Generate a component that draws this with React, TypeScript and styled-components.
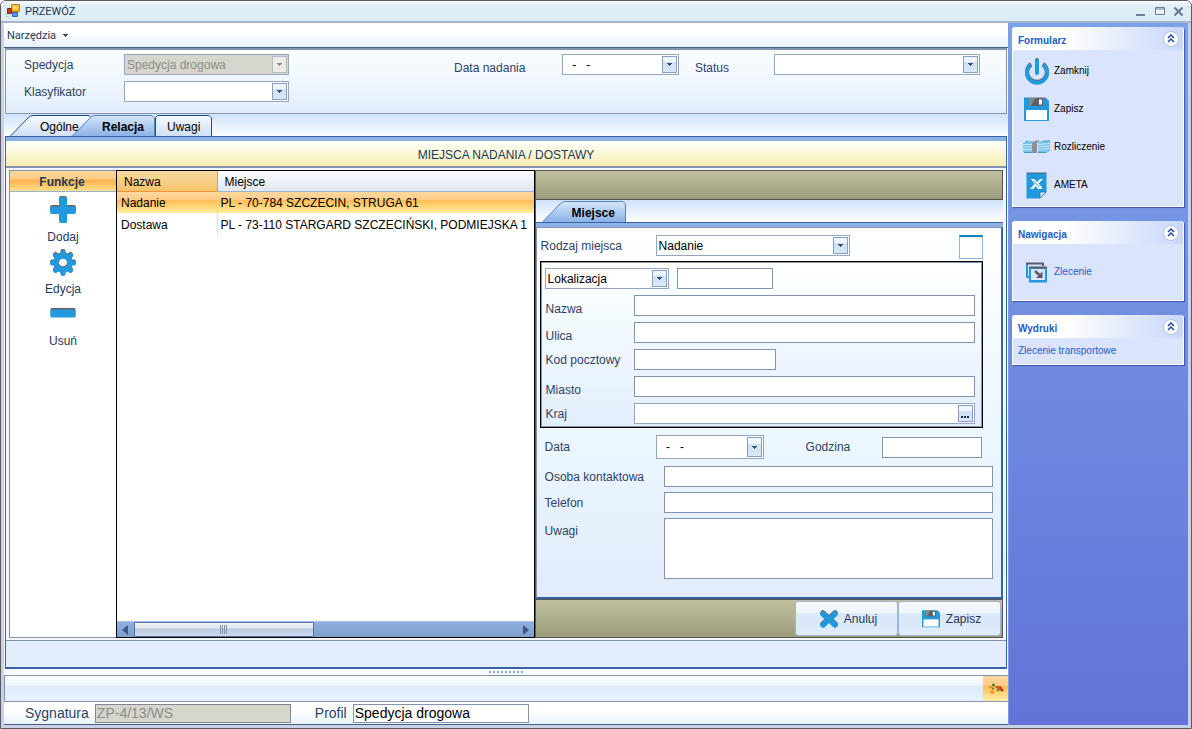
import React from "react";
import styled, { createGlobalStyle, css } from "styled-components";

const navy = "#1e395b";
const line = "#8494b0";
const steel = "#3763a5";
const blue = "#2299dd";

const Global = createGlobalStyle`
  *, *::before, *::after { box-sizing: border-box; }
  body { margin: 0; }
  body, button, input, select, textarea {
    font-family: "Liberation Sans", Arial, sans-serif;
    font-size: 12px;
    line-height: 14px;
    color: ${navy};
  }
  button { padding: 0; border: 0; background: none; cursor: pointer; }
`;

/* ---------- window frame ---------- */

const Window = styled.div`
  display: flex;
  flex-direction: column;
  min-height: 100vh;
  border: 1px solid #5c5a60;
  border-radius: 6px 6px 0 0;
  background: #cbd5ea;
  overflow: hidden;
`;

const TitleBar = styled.header`
  display: flex;
  align-items: center;
  gap: 4px;
  height: 22px;
  padding: 0 5px;
  border-bottom: 2px solid #a3b6cd;
  background: linear-gradient(#fafaff, #deeff6 5px, #dcedf5);
`;

const WindowTitle = styled.h1`
  flex: 1;
  margin: 0;
  padding-top: 2px;
  font-family: Roboto, sans-serif;
  font-size: 11px;
  font-weight: 400;
  line-height: 14px;
`;

const WindowButton = styled.button`
  display: flex;
  align-items: center;
  justify-content: center;
  width: 15px;
  height: 16px;
`;

const Body = styled.div`
  display: flex;
  flex: 1;
  border: solid #c8d2e6;
  border-width: 0 3px 3px;
`;

const Main = styled.main`
  display: flex;
  flex: 1;
  flex-direction: column;
  min-width: 0;
  background: #f7fbff;
`;

const MenuBar = styled.nav`
  display: flex;
  align-items: center;
  height: 25px;
  padding: 1px 0 0 3px;
  border-bottom: 1px solid #4c5f80;
  background: linear-gradient(#fff 40%, #e6f0fc);
`;

const MenuButton = styled.button`
  display: flex;
  align-items: center;
  gap: 7px;
  font-family: Roboto, sans-serif;
  font-size: 11px;
`;

/* ---------- fields ---------- */

const Label = styled.label<{ $width?: number; $low?: boolean; $large?: boolean }>`
  flex: none;
  width: ${(p) => (p.$width ? `${p.$width}px` : "auto")};
  font-size: ${(p) => (p.$large ? 14 : 12)}px;
  line-height: ${(p) => (p.$large ? 16 : 14)}px;
  color: #2d4266;
  white-space: nowrap;
  ${(p) => p.$low && css`align-self: flex-end;`}
`;

const TextInput = styled.input<{ $width?: number; $large?: boolean }>`
  flex: ${(p) => (p.$width ? "none" : "1")};
  width: ${(p) => (p.$width ? `${p.$width}px` : "auto")};
  min-width: 0;
  height: ${(p) => (p.$large ? 19 : 21)}px;
  padding: 0 1px;
  border: 1px solid ${line};
  background: #fff;
  color: #000;
  font-size: ${(p) => (p.$large ? 14 : 12)}px;
  &:disabled { background: #d6d6ce; color: #8c8c88; border-color: #85878c; }
`;

const TextArea = styled.textarea`
  flex: 1;
  min-width: 0;
  height: 61px;
  border: 1px solid ${line};
  background: #fff;
  resize: none;
`;

const FieldBox = styled.div<{ $width?: number; $tall?: boolean; $off?: boolean }>`
  position: relative;
  display: flex;
  align-items: center;
  flex: ${(p) => (p.$width ? "none" : "1")};
  width: ${(p) => (p.$width ? `${p.$width}px` : "auto")};
  height: ${(p) => (p.$tall ? 24 : 21)}px;
  border: 1px solid #94a6c2;
  background: ${(p) => (p.$off ? "#d6d6ce" : "#fff")};
`;

const NativeSelect = styled.select`
  flex: 1;
  min-width: 0;
  height: 100%;
  padding: 0 18px 0 2px;
  border: 0;
  appearance: none;
  background: transparent;
  color: #000;
  &:disabled { color: #8c8c88; opacity: 1; }
`;

const BareInput = styled.input`
  flex: 1;
  min-width: 0;
  height: 100%;
  padding: 0 6px;
  border: 0;
  background: transparent;
  color: #000;
  white-space: pre;
`;

const dropFace = css`
  display: flex;
  align-items: center;
  justify-content: center;
  width: 15px;
  border: 1px solid #8a9fc4;
  background: linear-gradient(#eef5fd 35%, #cfe1f6 36%, #d8e8fa);
`;

const SelectArrow = styled.span<{ $off?: boolean }>`
  ${dropFace}
  position: absolute;
  top: 1px;
  right: 1px;
  bottom: 1px;
  pointer-events: none;
  ${(p) => p.$off && css`background: #ecebe8; border-color: #b4bac6;`}
`;

const FieldButton = styled.button`
  ${dropFace}
  flex: none;
  align-self: stretch;
  margin: 1px;
`;

const Arrow = ({ off }: { off?: boolean }) => (
  <svg width="5" height="3" viewBox="0 0 5 3" aria-hidden="true">
    <path d="M0 0H5V1H4V2H3V3H2V2H1V1H0Z" fill={off ? "#85888f" : "#37506f"} />
  </svg>
);

type SelectProps = { id: string; width?: number; value?: string; disabled?: boolean; label?: string };

const Select = ({ id, width, value = "", disabled, label }: SelectProps) => (
  <FieldBox $width={width} $off={disabled}>
    <NativeSelect id={id} disabled={disabled} defaultValue={value} aria-label={label}>
      <option value={value}>{value}</option>
    </NativeSelect>
    <SelectArrow $off={disabled}><Arrow off={disabled} /></SelectArrow>
  </FieldBox>
);

const DateField = ({ id, width, tall }: { id: string; width: number; tall?: boolean }) => (
  <FieldBox $width={width} $tall={tall}>
    <BareInput id={id} defaultValue={"\u00a0-\u00a0\u00a0\u00a0-"} />
    <FieldButton aria-label="Wybierz datę"><Arrow /></FieldButton>
  </FieldBox>
);

const Row = styled.div<{ $gap?: number }>`
  display: flex;
  align-items: center;
  gap: ${(p) => p.$gap ?? 0}px;
`;

/* ---------- top form ---------- */

const HeaderPanel = styled.section`
  display: flex;
  align-items: flex-start;
  height: 66px;
  margin: 0 1px;
  padding: 4px 18px;
  border: 1px solid ${line};
  border-top-width: 2px;
  background: linear-gradient(#fbfeff, #e3edfc);
`;

const HeaderColumn = styled.div<{ $before?: number }>`
  display: flex;
  flex-direction: column;
  gap: 6px;
  margin-left: ${(p) => p.$before ?? 0}px;
`;

/* ---------- tabs ---------- */

const TabStrip = styled.div`
  display: flex;
  align-items: flex-end;
  height: 22px;
  padding-left: 6px;
  background: linear-gradient(#cfe3fd, #fcfeff);
`;

const TabButton = styled.button<{ $width: number; $active?: boolean; $overlap?: boolean; $slanted?: boolean }>`
  position: relative;
  z-index: ${(p) => (p.$active ? 1 : 0)};
  width: ${(p) => p.$width}px;
  height: 21px;
  margin-left: ${(p) => (p.$overlap ? -20 : 0)}px;
  padding-left: ${(p) => (p.$slanted ? 30 : 12)}px;
  color: #000;
  text-align: left;
  font-weight: ${(p) => (p.$active ? 700 : 400)};
`;

const TabShape = styled.svg`
  position: absolute;
  inset: 0;
`;

const TabText = styled.span`
  position: relative;
  display: block;
  padding-top: 3px;
`;

type TabProps = { text: string; width: number; active?: boolean; overlap?: boolean; slanted?: boolean };

const Tab = ({ text, width, active, overlap, slanted }: TabProps) => {
  const id = `fill-${text}`;
  const start = slanted ? "M0.5 21L18 3Q20 0.5 23 0.5" : "M0.5 21V2.5L2.5 0.5";
  return (
    <TabButton role="tab" aria-selected={!!active} $width={width} $active={active} $overlap={overlap} $slanted={slanted}>
      <TabShape width={width} height="21" aria-hidden="true">
        <defs>
          <linearGradient id={id} x1="0" y1="0" x2="0" y2="1">
            <stop offset="0" stopColor={active ? "#d5e6fb" : "#f6faff"} />
            <stop offset="1" stopColor={active ? "#8cb2e6" : "#cfe0f8"} />
          </linearGradient>
        </defs>
        <path d={`${start}H${width - 3}L${width - 0.5} 3V21`} fill={`url(#${id})`} stroke={active ? "#5a82bd" : "#1c4a9a"} />
      </TabShape>
      <TabText>{text}</TabText>
    </TabButton>
  );
};

const TabBody = styled.section`
  display: flex;
  flex: 1;
  flex-direction: column;
  margin: 0 1px;
  border: 1px solid ${steel};
  border-bottom-width: 2px;
  background: #e3edfc;
`;

const Band = styled.div<{ $edged?: boolean }>`
  height: ${(p) => (p.$edged ? 5 : 4)}px;
  border-top: ${(p) => (p.$edged ? `1px solid ${steel}` : "0")};
  background: #8cb2e6;
`;

const Banner = styled.h2`
  margin: 0;
  padding: 7px 0 4px;
  border-bottom: 2px solid ${line};
  background: linear-gradient(#fffffb, #f5efb2);
  font-size: 12px;
  font-weight: 400;
  line-height: 14px;
  text-align: center;
`;

const Workspace = styled.div`
  display: flex;
  flex: 1;
  padding: 2px 3px;
  border-bottom: 1px solid ${line};
  background: #f4f7ff;
`;

const FooterPanel = styled.div`
  height: 26px;
  background: #e3edfc;
`;

/* ---------- function list ---------- */

const FunctionPane = styled.aside`
  flex: none;
  width: 107px;
  border: 1px solid ${line};
  border-right: 0;
  background: #fff;
`;

const FunctionHeading = styled.h3`
  margin: 0;
  padding: 4px 2px 2px 0;
  border-bottom: 1px solid #9cb3cd;
  background: linear-gradient(#ffd89c, #ffcd85 40%, #fdb04b 45%, #ffe08e);
  font-size: 12px;
  line-height: 14px;
  text-align: center;
`;

const FunctionButton = styled.button`
  display: flex;
  flex-direction: column;
  align-items: center;
  width: 100%;
  height: 52px;
`;

const FunctionIcon = styled.span`
  display: flex;
  align-items: center;
  height: 36px;
  margin-bottom: 2px;
`;

/* ---------- list of places ---------- */

const ListPane = styled.section`
  display: flex;
  flex: 418 1 0;
  flex-direction: column;
  min-width: 0;
  border: 1px solid #000;
  background: #fff;
`;

const TableArea = styled.div`
  flex: 1;
  overflow: hidden;
`;

const PlacesTable = styled.table`
  width: 100%;
  border-collapse: collapse;
  table-layout: fixed;
  color: #000;
`;

const HeadCell = styled.th<{ $sorted?: boolean }>`
  width: ${(p) => (p.$sorted ? "100px" : "auto")};
  height: 20px;
  padding: 2px 7px 0;
  border-right: ${(p) => (p.$sorted ? "1px solid #f0943c" : "0")};
  border-bottom: 1px solid ${(p) => (p.$sorted ? "#f0943c" : "#9cb3cd")};
  background: ${(p) => (p.$sorted ? "linear-gradient(#f8d9a4, #f5c469)" : "linear-gradient(#fcfdff, #dfe5f0)")};
  font-weight: 400;
  text-align: left;
`;

const PlaceRow = styled.tr<{ $selected?: boolean }>`
  height: 22px;
  background: ${(p) => (p.$selected ? "linear-gradient(#ffd9a0, #ffcd8c 38%, #ffbd55 42%, #ffee9f)" : "#fff")};
`;

const PlaceCell = styled.td`
  padding: 2px 3px 0 4px;
  white-space: nowrap;
  overflow: hidden;
  & + & { padding-left: 3px; border-left: 1px solid #d5dbe8; }
`;

const ScrollBar = styled.div`
  display: flex;
  align-items: center;
  justify-content: space-between;
  height: 16px;
  padding: 0 5px;
  border-top: 1px solid #a9c4ea;
  background: linear-gradient(#8fb0dd, #7f9fcb);
`;

const ScrollTrack = styled.div`
  flex: 1;
  margin: 0 6px;
`;

const ScrollThumb = styled.div`
  display: flex;
  align-items: center;
  justify-content: center;
  gap: 1px;
  width: 47%;
  height: 15px;
  border: 1px solid #58719c;
  border-radius: 1px;
  background: linear-gradient(#eef2f6, #dfe7ef 40%, #bccbe0 45%, #ced9ec);
`;

const Grip = styled.i`
  width: 1px;
  height: 9px;
  background: #8292aa;
`;

/* ---------- place form ---------- */

const FormPane = styled.section`
  display: flex;
  flex: 469 1 0;
  flex-direction: column;
  min-width: 0;
  border-left: 1px solid #5c5a50;
`;

const OliveBar = styled.div`
  height: 30px;
  border: 1px solid #55554c;
  border-left: 0;
  background: linear-gradient(#c1c1a2, #9b9b7d);
`;

const ActionBar = styled(OliveBar)`
  display: flex;
  justify-content: flex-end;
  height: 39px;
  padding: 1px;
`;

const ActionButton = styled.button`
  display: flex;
  align-items: center;
  justify-content: center;
  gap: 6px;
  width: 103px;
  padding-left: 4px;
  border: 1px solid #9eb4d4;
  border-radius: 3px;
  background: linear-gradient(#f8fbff, #ecf4fd 34%, #d8e7f9 36%, #e0ecfb);
`;

const FormSurface = styled.div`
  flex: 1;
  padding: 7px 8px 16px 3px;
  border: 1px solid ${line};
  border-right: 2px solid ${steel};
  border-bottom: 2px solid ${steel};
  background: linear-gradient(#fff, #f3fbff 30%, #ecf6ff 60%, #e1ebfb);
`;

const FormTopLine = styled.div`
  display: flex;
  align-items: flex-start;
  padding: 0 10px 2px 1px;
`;

const KindField = styled.div`
  display: flex;
  align-items: center;
  flex: 1;
`;

const CalendarButton = styled.button`
  width: 24px;
  height: 24px;
  border: 1px solid #8fb9e4;
  border-top: 2px solid #0d84c6;
  background: linear-gradient(#e2e6ea, #fff 2px);
`;

const AddressBox = styled.fieldset`
  display: flex;
  flex-direction: column;
  gap: 6px;
  margin: 0 10px 7px 0;
  padding: 6px 7px 3px 4px;
  border: 1px solid #000;
  box-shadow: inset 0 0 0 1px #8a94ab;
  background: linear-gradient(#fff, #f3fbff 35%, #e3edfd);
`;

const AddressRow = styled.div`
  display: flex;
  align-items: center;
  padding-left: 1px;
`;

const ContactRows = styled.div`
  display: flex;
  flex-direction: column;
  gap: 5px;
  padding-left: 5px;
`;

const ContactRow = styled.div<{ $top?: boolean }>`
  display: flex;
  align-items: ${(p) => (p.$top ? "flex-start" : "center")};
`;

const NoteLabel = styled(Label)`
  padding-top: 6px;
`;

const DateRow = styled.div`
  display: flex;
  align-items: center;
  padding: 0 11px 2px 0;
`;

const Spacer = styled.div<{ $width?: number }>`
  flex: ${(p) => (p.$width ? "none" : "1")};
  width: ${(p) => (p.$width ? `${p.$width}px` : "auto")};
`;

/* ---------- bottom of the window ---------- */

const Splitter = styled.div`
  display: flex;
  justify-content: center;
  gap: 2px;
  height: 6px;
  padding-top: 2px;
  background: #f8fcff;
`;

const Dot = styled.i`
  width: 2px;
  height: 2px;
  background: #79abe0;
`;

const ToolStrip = styled.div`
  display: flex;
  justify-content: flex-end;
  height: 27px;
  border: 1px solid ${line};
  border-right: 0;
  background: linear-gradient(#fbfeff, #edf6ff 38%, #deebfa 42%, #e6f3ff);
`;

const ToolButton = styled.button`
  display: flex;
  align-items: center;
  justify-content: center;
  width: 25px;
  background: linear-gradient(#ffd7a0, #ffcb80 38%, #ffbe56 42%, #fff0a8);
`;

const StatusBar = styled.footer`
  display: flex;
  align-items: center;
  gap: 6px;
  height: 23px;
  padding-left: 21px;
  border-bottom: 1px solid #4c5f80;
  background: linear-gradient(#fff 40%, #e8f2fc);
`;

/* ---------- task sidebar ---------- */

const Sidebar = styled.aside`
  display: flex;
  flex: none;
  flex-direction: column;
  gap: 14px;
  width: 180px;
  padding: 4px 4px 4px 3px;
  border-left: 1px solid #7f9bdf;
  background: linear-gradient(#7ba2e8, #6373d8);
`;

const Card = styled.section`
  border: solid #fff;
  border-width: 0 1px 1px;
  border-radius: 3px 3px 0 0;
  box-shadow: 1px 1px 1px #3f55a8;
  background: #dbe4fd;
`;

const CardHeader = styled.div`
  display: flex;
  align-items: center;
  justify-content: space-between;
  height: 23px;
  padding: 0 4px 0 5px;
  border-radius: 3px 3px 0 0;
  background: linear-gradient(to right, #fff 30%, #c9d7fb);
`;

const CardTitle = styled.h2`
  margin: 0;
  padding-top: 5px;
  color: #215dc6;
  font-size: 10px;
  font-weight: 700;
  line-height: 14px;
`;

const CollapseButton = styled.button`
  display: flex;
  align-items: center;
  justify-content: center;
  width: 16px;
  height: 16px;
  border: 1px solid #b9c3e0;
  border-radius: 50%;
  background: #fff;
`;

const CardBody = styled.div<{ $pad: number }>`
  display: flex;
  flex-direction: column;
  padding: ${(p) => p.$pad}px 0;
`;

const taskText = css`
  display: flex;
  align-items: center;
  gap: 4px;
  font-size: 10px;
`;

const Task = styled.button`
  ${taskText}
  height: 38px;
  padding-left: 10px;
  color: #000;
`;

const TaskLink = styled.a<{ $tall?: boolean }>`
  ${taskText}
  height: ${(p) => (p.$tall ? 38 : 18)}px;
  padding-left: ${(p) => (p.$tall ? 10 : 5)}px;
  color: #215dc6;
  text-decoration: none;
`;

const TaskIcon = styled.span`
  display: flex;
  justify-content: center;
  width: 27px;
`;

/* ---------- drawings ---------- */

const Diskette = ({ size }: { size: number }) => (
  <svg width={size} height={size} viewBox="0 0 25 25" aria-hidden="true">
    <path d="M0 1H22L25 4V24H0Z" fill={blue} />
    <path d="M0 1H22" stroke="#4c7ea0" />
    <path d="M5 1H19V9H5Z" fill="#5d6066" />
    <path d="M5 1H11L7 9H5Z" fill="#85878b" />
    <path d="M15 2.500H18V7.500H15Z" fill="#fff" />
    <path d="M2 13H23V23H2Z" fill="#fff" />
  </svg>
);

const Power = () => (
  <svg width="26" height="27" viewBox="0 0 26 27" fill="none" aria-hidden="true">
    <path d="M7 5.800A10 10 0 1 0 19 5.800" stroke="#626971" strokeWidth="4" />
    <path d="M7 6.800A10 10 0 1 0 19 6.800" stroke={blue} strokeWidth="4" />
    <path d="M13 2V14" stroke="#626971" strokeWidth="4" strokeLinecap="round" />
    <path d="M13 3V15" stroke={blue} strokeWidth="4" strokeLinecap="round" />
  </svg>
);

const Banknotes = () => (
  <svg width="27" height="14" viewBox="0 0 27 14" aria-hidden="true">
    <path d="M0 3L5 1H12L9 3V13H4L0 12ZM15 3L18 1H27V11L23 13H15Z" fill="#7cc5ea" />
    <path d="M0 4.500H10M0 7H10M0 9.500H10M15 4.500L27 3.500M15 7L27 6M15 9.500L27 8.500" stroke="#c6e6f7" />
    <path d="M9 3L13 0.500H17L14 3V13H9Z" fill="#8b9197" />
    <path d="M1 12.500H9M15 12.500H23M2 2.500L5 1M20 1H27" stroke="#3c9dcd" />
  </svg>
);

const SheetFile = () => (
  <svg width="21" height="27" viewBox="0 0 21 27" aria-hidden="true">
    <path d="M0.500 1H20.500V20L14 26.500H0.500Z" fill={blue} />
    <path d="M0.500 1H20.500" stroke="#56626c" />
    <path d="M14 26V20H20Z" fill="#fff" stroke="#1782bd" />
    <path d="M5 7H8L11 10L14 7H17L12.500 11.500L16 15V17H12L10 14L7 17H4L8.500 12Z" fill="#fff" />
    <path d="M7.500 9L13.500 15" stroke={blue} />
  </svg>
);

const Windows = () => (
  <svg width="22" height="21" viewBox="0 0 22 21" aria-hidden="true">
    <path d="M1 16V2M0 15H4" fill="none" stroke={blue} strokeWidth="2" />
    <path d="M0 1.500H17V4" fill="none" stroke="#595d63" strokeWidth="2" />
    <path d="M4 6H20V19H4Z" fill="#dce5fb" stroke={blue} strokeWidth="2" />
    <path d="M3 5.500H21" stroke="#595d63" strokeWidth="2" />
    <path d="M3 19.500H21" stroke={blue} strokeWidth="2" />
    <path d="M9 9L14 13.500" stroke="#595d63" strokeWidth="2.500" />
    <path d="M16.500 9.500V16H10Z" fill="#595d63" />
  </svg>
);

const Plus = () => (
  <svg width="26" height="28" viewBox="0 0 26 28" aria-hidden="true">
    <path d="M11 0H15Q17 0 17 2V9H24Q26 9 26 11V15Q26 17 24 17H17V24H9V17H2Q0 17 0 15V11Q0 9 2 9H9V2Q9 0 11 0Z" fill="#6b655f" />
    <path d="M9 3Q9 1 11 1H15Q17 1 17 3V10.500H24Q26 10.500 26 12V16Q26 18 24 18H17V26Q17 27 15 27H11Q9 27 9 25V18H2Q0 18 0 16V12Q0 10.500 2 10.500H9Z" fill={blue} />
  </svg>
);

const Gear = () => {
  const teeth = [0, 45, 90, 135, 180, 225, 270, 315];
  const shape = (
    <>
      <circle cx="13" cy="13" r="7" fill="none" strokeWidth="5.500" stroke="currentColor" />
      {teeth.map((a) => (
        <rect key={a} x="10.500" y="0" width="5" height="6" rx="2" fill="currentColor" transform={`rotate(${a} 13 13)`} />
      ))}
    </>
  );
  return (
    <svg width="26" height="27" viewBox="0 0 26 27" aria-hidden="true">
      <g color="#6b655f">{shape}</g>
      <g color={blue} transform="translate(0 1)">{shape}</g>
    </svg>
  );
};

const Minus = () => (
  <svg width="26" height="12" viewBox="0 0 26 12" aria-hidden="true">
    <rect x="0.500" y="0" width="25" height="8" rx="1.500" fill="#5f6165" />
    <rect x="0.500" y="1.500" width="25" height="8" rx="1" fill={blue} />
  </svg>
);

const Cross = () => (
  <svg width="18" height="18" viewBox="0 0 18 18" aria-hidden="true">
    <path d="M3 3L15 14M15 3L3 14" stroke="#5f6a73" strokeWidth="5.500" strokeLinecap="round" />
    <path d="M3 4L15 15M15 4L3 15" stroke={blue} strokeWidth="5.500" strokeLinecap="round" />
  </svg>
);

const Chevrons = () => (
  <svg width="8" height="9" viewBox="0 0 8 9" fill="none" stroke="#25489b" strokeWidth="1.500" aria-hidden="true">
    <path d="M1 4L4 1L7 4M1 8L4 5L7 8" />
  </svg>
);

const AppIcon = () => (
  <svg width="15" height="14" viewBox="0 0 15 14" aria-hidden="true">
    <path d="M5.500 0.500H13.500V7.500H5.500Z" fill="#fbb829" stroke="#b9862b" />
    <path d="M7 2H11V5H7Z" fill="#ffe07a" />
    <path d="M1.500 4.500H5.500V9.500H1.500Z" fill="#c03a25" stroke="#8b2519" />
    <path d="M6.500 8.500H11.500V12.500H6.500Z" fill="#5c95ec" stroke="#3262b8" />
    <path d="M0.500 10V13H4" fill="none" stroke="#a9b2b8" strokeDasharray="1 1" />
  </svg>
);

const Beads = () => (
  <svg width="16" height="12" viewBox="0 0 16 12" aria-hidden="true">
    <circle cx="2.500" cy="4" r="1.500" fill="#c79a3d" />
    <circle cx="5.500" cy="2" r="1.500" fill="#5a6c28" />
    <circle cx="5" cy="5.500" r="1" fill="#8a5a1e" />
    <circle cx="9" cy="4" r="1.500" fill="#b4631e" />
    <circle cx="12" cy="5" r="2" fill="#cc4422" />
    <circle cx="10" cy="7" r="1.500" fill="#7c8a2e" />
    <circle cx="4.500" cy="9" r="2" fill="#e49c28" />
    <circle cx="14" cy="7" r="1.500" fill="#a33a20" />
  </svg>
);

type TaskCardProps = { title: string; pad: number; children: React.ReactNode };

const TaskCard = ({ title, pad, children }: TaskCardProps) => (
  <Card>
    <CardHeader>
      <CardTitle>{title}</CardTitle>
      <CollapseButton aria-label={`Zwiń: ${title}`}><Chevrons /></CollapseButton>
    </CardHeader>
    <CardBody $pad={pad}>{children}</CardBody>
  </Card>
);

const functions = [
  { text: "Dodaj", icon: <Plus /> },
  { text: "Edycja", icon: <Gear /> },
  { text: "Usuń", icon: <Minus /> },
];

const places = [
  { name: "Nadanie", place: "PL - 70-784 SZCZECIN, STRUGA 61" },
  { name: "Dostawa", place: "PL - 73-110 STARGARD SZCZECIŃSKI, PODMIEJSKA 1" },
];

const tasks = [
  { text: "Zamknij", icon: <Power /> },
  { text: "Zapisz", icon: <Diskette size={25} /> },
  { text: "Rozliczenie", icon: <Banknotes /> },
  { text: "AMETA", icon: <SheetFile /> },
];

const PlaceForm = () => (
  <FormSurface>
    <FormTopLine>
      <KindField>
        <Label htmlFor="kind" $width={115}>Rodzaj miejsca</Label>
        <Select id="kind" width={194} value="Nadanie" />
      </KindField>
      <CalendarButton aria-label="Kalendarz" />
    </FormTopLine>
    <AddressBox>
      <Row $gap={8}>
        <Select id="lookup" width={124} value="Lokalizacja" label="Szukaj według" />
        <TextInput $width={96} aria-label="Lokalizacja" />
      </Row>
      <AddressRow>
        <Label htmlFor="name" $width={88} $low>Nazwa</Label>
        <TextInput id="name" />
      </AddressRow>
      <AddressRow>
        <Label htmlFor="street" $width={88} $low>Ulica</Label>
        <TextInput id="street" />
      </AddressRow>
      <AddressRow>
        <Label htmlFor="zip" $width={88}>Kod pocztowy</Label>
        <TextInput id="zip" $width={142} />
      </AddressRow>
      <AddressRow>
        <Label htmlFor="city" $width={88} $low>Miasto</Label>
        <TextInput id="city" />
      </AddressRow>
      <AddressRow>
        <Label htmlFor="country" $width={88}>Kraj</Label>
        <FieldBox>
          <BareInput id="country" />
          <FieldButton aria-label="Wybierz kraj">
            <svg width="9" height="10" viewBox="0 0 9 10" aria-hidden="true">
              <path d="M0 7H2V9H0ZM3 7H5V9H3ZM6 7H8V9H6Z" fill="#1b2c4b" />
            </svg>
          </FieldButton>
        </FieldBox>
      </AddressRow>
    </AddressBox>
    <ContactRows>
      <DateRow>
        <Label htmlFor="date" $width={111}>Data</Label>
        <DateField id="date" width={108} tall />
        <Spacer $width={42} />
        <Label htmlFor="hour">Godzina</Label>
        <Spacer />
        <TextInput id="hour" $width={100} />
      </DateRow>
      <ContactRow>
        <Label htmlFor="contact" $width={119}>Osoba kontaktowa</Label>
        <TextInput id="contact" />
      </ContactRow>
      <ContactRow>
        <Label htmlFor="phone" $width={119}>Telefon</Label>
        <TextInput id="phone" />
      </ContactRow>
      <ContactRow $top>
        <NoteLabel htmlFor="notes" $width={119}>Uwagi</NoteLabel>
        <TextArea id="notes" />
      </ContactRow>
    </ContactRows>
  </FormSurface>
);

export default function App() {
  return (
    <>
      <Global />
      <Window>
        <TitleBar>
          <AppIcon />
          <WindowTitle>PRZEWÓZ</WindowTitle>
          <WindowButton aria-label="Minimalizuj">
            <svg width="9" height="9"><path d="M0 7H9V9H0Z" fill="#6f7f98" /></svg>
          </WindowButton>
          <WindowButton aria-label="Maksymalizuj">
            <svg width="10" height="8"><path d="M.5 .5H9.500V7.500H.5ZM1 2H9" fill="#eef5fa" stroke="#6f7f98" /></svg>
          </WindowButton>
          <WindowButton aria-label="Zamknij okno">
            <svg width="9" height="9"><path d="M.5 .5L8.500 8.500M8.500 .5L.5 8.500" stroke="#66778f" strokeWidth="2" /></svg>
          </WindowButton>
        </TitleBar>
        <Body>
          <Main>
            <MenuBar>
              <MenuButton>Narzędzia <Arrow /></MenuButton>
            </MenuBar>
            <HeaderPanel>
              <HeaderColumn>
                <Row>
                  <Label htmlFor="forwarding" $width={100}>Spedycja</Label>
                  <Select id="forwarding" width={165} value="Spedycja drogowa" disabled />
                </Row>
                <Row>
                  <Label htmlFor="classifier" $width={100}>Klasyfikator</Label>
                  <Select id="classifier" width={165} />
                </Row>
              </HeaderColumn>
              <HeaderColumn $before={165}>
                <Row>
                  <Label htmlFor="posting" $width={108} $low>Data nadania</Label>
                  <DateField id="posting" width={117} />
                </Row>
              </HeaderColumn>
              <HeaderColumn $before={16}>
                <Row>
                  <Label htmlFor="status" $width={79} $low>Status</Label>
                  <Select id="status" width={206} />
                </Row>
              </HeaderColumn>
            </HeaderPanel>
            <TabStrip role="tablist">
              <Tab text="Ogólne" width={82} slanted />
              <Tab text="Relacja" width={83} slanted active overlap />
              <Tab text="Uwagi" width={57} />
            </TabStrip>
            <TabBody>
              <Band />
              <Banner>MIEJSCA NADANIA / DOSTAWY</Banner>
              <Workspace>
                <FunctionPane>
                  <FunctionHeading>Funkcje</FunctionHeading>
                  {functions.map((f) => (
                    <FunctionButton key={f.text}>
                      <FunctionIcon>{f.icon}</FunctionIcon>
                      {f.text}
                    </FunctionButton>
                  ))}
                </FunctionPane>
                <ListPane>
                  <TableArea>
                    <PlacesTable>
                      <thead>
                        <tr>
                          <HeadCell $sorted>Nazwa</HeadCell>
                          <HeadCell>Miejsce</HeadCell>
                        </tr>
                      </thead>
                      <tbody>
                        {places.map((p, i) => (
                          <PlaceRow key={p.name} $selected={i === 0}>
                            <PlaceCell>{p.name}</PlaceCell>
                            <PlaceCell>{p.place}</PlaceCell>
                          </PlaceRow>
                        ))}
                      </tbody>
                    </PlacesTable>
                  </TableArea>
                  <ScrollBar>
                    <svg width="6" height="10" aria-hidden="true"><path d="M6 0V10L0 5Z" fill="#3e5585" /></svg>
                    <ScrollTrack>
                      <ScrollThumb><Grip /><Grip /><Grip /><Grip /></ScrollThumb>
                    </ScrollTrack>
                    <svg width="6" height="10" aria-hidden="true"><path d="M0 0V10L6 5Z" fill="#3e5585" /></svg>
                  </ScrollBar>
                </ListPane>
                <FormPane>
                  <OliveBar />
                  <TabStrip role="tablist">
                    <Tab text="Miejsce" width={84} slanted active />
                  </TabStrip>
                  <Band $edged />
                  <PlaceForm />
                  <ActionBar>
                    <ActionButton><Cross />Anuluj</ActionButton>
                    <ActionButton><Diskette size={18} />Zapisz</ActionButton>
                  </ActionBar>
                </FormPane>
              </Workspace>
              <FooterPanel />
            </TabBody>
            <Splitter>
              {Array.from({ length: 9 }, (_, i) => <Dot key={i} />)}
            </Splitter>
            <ToolStrip>
              <ToolButton aria-label="Powiązania"><Beads /></ToolButton>
            </ToolStrip>
            <StatusBar>
              <Label htmlFor="signature" $large>Sygnatura</Label>
              <TextInput id="signature" $width={196} $large disabled defaultValue="ZP-4/13/WS" />
              <Spacer $width={12} />
              <Label htmlFor="profile" $large>Profil</Label>
              <TextInput id="profile" $width={176} $large defaultValue="Spedycja drogowa" />
            </StatusBar>
          </Main>
          <Sidebar>
            <TaskCard title="Formularz" pad={2}>
              {tasks.map((t) => (
                <Task key={t.text}><TaskIcon>{t.icon}</TaskIcon>{t.text}</Task>
              ))}
            </TaskCard>
            <TaskCard title="Nawigacja" pad={9}>
              <TaskLink href="#zlecenie" $tall><TaskIcon><Windows /></TaskIcon>Zlecenie</TaskLink>
            </TaskCard>
            <TaskCard title="Wydruki" pad={4}>
              <TaskLink href="#wydruk">Zlecenie transportowe</TaskLink>
            </TaskCard>
          </Sidebar>
        </Body>
      </Window>
    </>
  );
}
